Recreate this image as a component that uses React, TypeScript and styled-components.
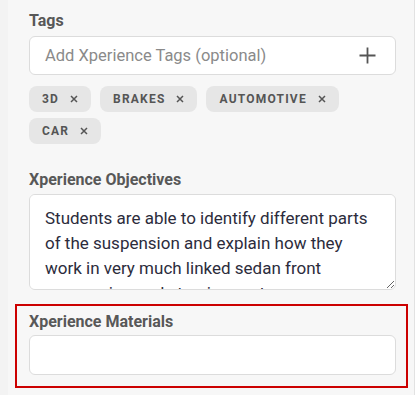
import React from "react";
import styled, { createGlobalStyle } from "styled-components";

const GlobalStyle = createGlobalStyle`
  html, body {
    margin: 0;
    padding: 0;
    background: #ffffff;
  }
  body {
    font-family: Roboto, "Noto Sans", sans-serif;
  }
`;

const Page = styled.div`
  width: 417px;
  height: 395px;
  display: flex;
  overflow: hidden;
`;

const Panel = styled.div`
  width: 415px;
  height: 395px;
  box-sizing: border-box;
  background: #f7f7f7;
  border-left: 8px solid #f3f3f3;
  border-right: 1px solid #e2e2e2;
  padding: 0 6px 0 7px;
  display: flex;
  flex-direction: column;
`;

const Field = styled.div<{ $top: number }>`
  display: flex;
  flex-direction: column;
  padding: ${(p) => p.$top}px 12px 0 14px;
`;

const HighlightField = styled.div`
  display: flex;
  flex-direction: column;
  margin-top: 14px;
  padding: 5px 10px 11px 12px;
  border: 2px solid #cc0000;
`;

const Label = styled.label<{ $gap: number }>`
  font-size: 16px;
  font-weight: 700;
  color: #585858;
  line-height: 22px;
  margin-bottom: ${(p) => p.$gap}px;
`;

const InputBox = styled.div<{ $height: number }>`
  height: ${(p) => p.$height}px;
  box-sizing: border-box;
  background: #ffffff;
  border: 1px solid #dcdcdc;
  border-radius: 6px;
  display: flex;
  align-items: center;
  padding: 0 19px 0 15px;
`;

const Placeholder = styled.span`
  flex: 1;
  font-size: 16.5px;
  color: #8a8a8a;
`;

const PlusIcon = styled.svg`
  width: 17px;
  height: 17px;
`;

const TagList = styled.div`
  display: flex;
  flex-wrap: wrap;
  gap: 6px 9px;
  margin-top: 11px;
`;

const Tag = styled.span`
  height: 26px;
  box-sizing: border-box;
  background: #e6e6e6;
  border-radius: 8px;
  padding: 0 13px;
  display: inline-flex;
  align-items: center;
  gap: 11px;
  font-size: 12px;
  font-weight: 700;
  letter-spacing: 1.2px;
  color: #555555;
`;

const TagClose = styled.svg`
  width: 8px;
  height: 8px;
`;

const TextArea = styled.textarea`
  height: 96px;
  box-sizing: border-box;
  background: #ffffff;
  border: 1px solid #dcdcdc;
  border-radius: 6px;
  padding: 11px 12px 0 15px;
  font-family: Roboto, "Noto Sans", sans-serif;
  font-size: 17px;
  line-height: 25px;
  color: #2c2c3c;
  resize: vertical;
  overflow-y: scroll;
  outline: none;

  &::-webkit-scrollbar {
    width: 9px;
  }
  &::-webkit-scrollbar-track {
    background: transparent;
    margin: 5px 0 28px 0;
  }
  &::-webkit-scrollbar-thumb {
    background: #c2c2c2;
    border-left: 2px solid #ffffff;
    border-right: 4px solid #ffffff;
  }
`;

const tags = ["3D", "BRAKES", "AUTOMOTIVE", "CAR"];

export default function App() {
  return (
    <>
      <GlobalStyle />
      <Page>
        <Panel>
          <Field $top={10}>
            <Label $gap={4}>Tags</Label>
            <InputBox $height={39}>
              <Placeholder>Add Xperience Tags (optional)</Placeholder>
              <PlusIcon viewBox="0 0 17 17">
                <path d="M8.5 0.5v16M0.5 8.5h16" stroke="#555" strokeWidth="1.8" fill="none" />
              </PlusIcon>
            </InputBox>
            <TagList>
              {tags.map((t) => (
                <Tag key={t}>
                  {t}
                  <TagClose viewBox="0 0 8 8">
                    <path d="M1 1l6 6M7 1L1 7" stroke="#555" strokeWidth="1.5" fill="none" />
                  </TagClose>
                </Tag>
              ))}
            </TagList>
          </Field>
          <Field $top={25}>
            <Label $gap={3}>Xperience Objectives</Label>
            <TextArea
              defaultValue="Students are able to identify different parts of the suspension and explain how they work in very much linked sedan front suspension and steering systems."
            />
          </Field>
          <HighlightField>
            <Label $gap={2}>Xperience Materials</Label>
            <InputBox $height={40} />
          </HighlightField>
        </Panel>
      </Page>
    </>
  );
}
